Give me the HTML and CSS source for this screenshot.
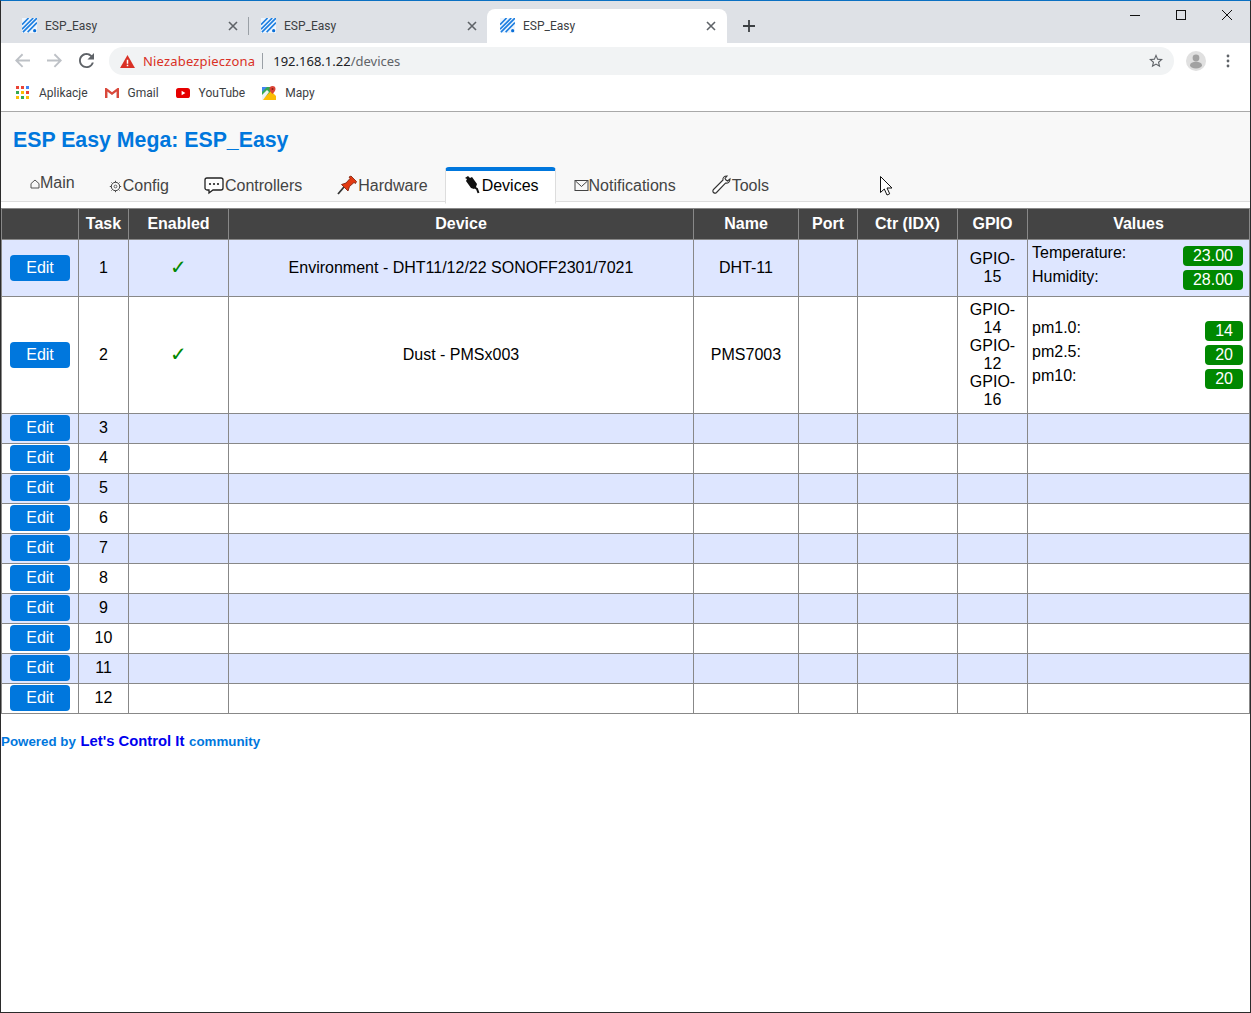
FILE: index.html
```html
<!DOCTYPE html>
<html lang="pl">
<head>
<meta charset="utf-8">
<title>ESP_Easy</title>
<link rel="stylesheet" href="styles.css">
</head>
<body>
<svg class="defs" width="0" height="0">
  <defs>
    <symbol id="fav" viewBox="0 0 16 16">
      <rect width="16" height="16" fill="#eef5fd"/>
      <path d="M0 7 7 0M0 12 12 0M1 15 16 0M6 15 16 5" stroke="#1c7ee0" stroke-width="1.7" fill="none"/>
      <circle cx="13.5" cy="13.5" r="1.7" fill="#0a6fd8"/>
    </symbol>
    <symbol id="x" viewBox="0 0 10 10">
      <path d="M1 1 9 9M9 1 1 9" stroke="#5f6368" stroke-width="1.6" fill="none"/>
    </symbol>
  </defs>
</svg>
<div class="window">
  <div class="tabstrip">
    <div class="ctab">
      <svg class="fav"><use href="#fav"/></svg><span class="ctab-title">ESP_Easy</span><svg class="ctab-x"><use href="#x"/></svg>
    </div>
    <div class="ctab-sep"></div>
    <div class="ctab ctab-second">
      <svg class="fav"><use href="#fav"/></svg><span class="ctab-title">ESP_Easy</span><svg class="ctab-x"><use href="#x"/></svg>
    </div>
    <div class="ctab ctab-active">
      <svg class="fav"><use href="#fav"/></svg><span class="ctab-title">ESP_Easy</span><svg class="ctab-x"><use href="#x"/></svg>
    </div>
    <svg class="newtab" viewBox="0 0 12 12"><path d="M6 0V12M0 6H12" stroke="#3c4043" stroke-width="1.8"/></svg>
    <div class="winctl">
      <svg class="win-btn" viewBox="0 0 10 10"><path d="M0 5.5H10" stroke="#111" stroke-width="1"/></svg>
      <svg class="win-btn" viewBox="0 0 10 10"><rect x=".5" y=".5" width="9" height="9" fill="none" stroke="#111"/></svg>
      <svg class="win-btn" viewBox="0 0 10 10"><path d="M0 0 10 10M10 0 0 10" stroke="#111" stroke-width="1"/></svg>
    </div>
  </div>
  <div class="toolbar">
    <svg class="nav" viewBox="0 0 16 16"><path d="M16 7H3.8l5-5L7.4.6 0 8l7.4 7.4 1.4-1.4-5-5H16z" fill="#bdc1c6"/></svg>
    <svg class="nav" viewBox="0 0 16 16"><path d="M0 7h12.2l-5-5L8.6.6 16 8l-7.4 7.4L7.2 14l5-5H0z" fill="#bdc1c6"/></svg>
    <svg class="nav nav-reload" viewBox="4 4 16 16"><path d="M17.65 6.35A7.958 7.958 0 0 0 12 4c-4.42 0-7.99 3.58-7.99 8s3.57 8 7.99 8c3.73 0 6.84-2.55 7.73-6h-2.08A5.99 5.99 0 0 1 12 18c-3.31 0-6-2.69-6-6s2.69-6 6-6c1.66 0 3.14.69 4.22 1.78L13 11h7V4l-2.35 2.35z" fill="#5f6368"/></svg>
    <div class="omnibox">
      <svg class="warn" viewBox="0 0 16 14"><path d="M8 0 16 14H0z" fill="#d93025"/><path d="M7.2 5h1.6v4.5H7.2zM7.2 10.5h1.6V12H7.2z" fill="#fff"/></svg>
      <span class="insecure">Niezabezpieczona</span>
      <span class="omni-sep"></span>
      <span class="url">192.168.1.22<span class="url-path">/devices</span></span>
      <svg class="star" viewBox="2 2 20 20"><path d="M22 9.24l-7.19-.62L12 2 9.19 8.63 2 9.24l5.46 4.73L5.82 21 12 17.27 18.18 21l-1.63-7.03L22 9.24zM12 15.4l-3.76 2.27 1-4.28-3.32-2.88 4.38-.38L12 6.1l1.71 4.04 4.38.38-3.32 2.88 1 4.28L12 15.4z" fill="#5f6368"/></svg>
    </div>
    <svg class="avatar" viewBox="0 0 20 20"><circle cx="10" cy="10" r="10" fill="#e0e0e0"/><circle cx="10" cy="7" r="3.4" fill="#a2a2a2"/><ellipse cx="10" cy="14.2" rx="6" ry="3.4" fill="#a2a2a2"/></svg>
    <svg class="menu-dots" viewBox="0 0 4 14"><circle cx="2" cy="2" r="1.4" fill="#5f6368"/><circle cx="2" cy="7" r="1.4" fill="#5f6368"/><circle cx="2" cy="12" r="1.4" fill="#5f6368"/></svg>
  </div>
  <div class="bookmarks">
    <div class="bm bm-apps">
      <svg class="bm-ico" viewBox="0 0 14 14">
        <g fill="#ea4335"><rect width="3" height="3"/><rect x="5" width="3" height="3"/></g><rect x="10" width="3" height="3" fill="#4285f4"/>
        <rect y="5" width="3" height="3" fill="#34a853"/><rect x="5" y="5" width="3" height="3" fill="#fbbc05"/><rect x="10" y="5" width="3" height="3" fill="#ea4335"/>
        <rect y="10" width="3" height="3" fill="#fbbc05"/><rect x="5" y="10" width="3" height="3" fill="#34a853"/><rect x="10" y="10" width="3" height="3" fill="#fbbc05"/>
      </svg>Aplikacje
    </div>
    <div class="bm bm-gap">
      <svg class="bm-ico" viewBox="0 0 14 14"><path d="M1.900 11.500V4.800L7 8.600l5.100-3.800v6.700" fill="none" stroke="#d8d8d8" stroke-width="1"/><path d="M0 2h1.500L7 6.300 12.500 2H14v10h-2.400V5.600L7 9 2.400 5.600V12H0z" fill="#d9483b"/></svg>Gmail
    </div>
    <div class="bm bm-gap">
      <svg class="bm-ico" viewBox="0 0 14 14"><rect y="2" width="14" height="10" rx="2.6" fill="#e60000"/><path d="M5.6 4.8 9.4 7 5.6 9.2z" fill="#fff"/></svg>YouTube
    </div>
    <div class="bm bm-gap">
      <svg class="bm-ico" viewBox="0 0 14 14"><path d="M0 1h9v13H0z" fill="#34a853"/><path d="M0 14 9 5l5 5v4z" fill="#fbbc05"/><path d="M0 1h5L0 6z" fill="#4285f4"/><path d="M0 9 5 4l2 2-6 8H0z" fill="#f1f3f4"/><path d="M10.500 0A3 3 0 0 1 13.500 3C13.500 5 10.500 8 10.500 8S7.500 5 7.500 3A3 3 0 0 1 10.500 0z" fill="#db4437"/><circle cx="10.500" cy="3" r="1" fill="#8e1f14"/></svg>Mapy
    </div>
  </div>

  <div class="apheader">
    <h1 class="title">ESP Easy Mega: ESP_Easy</h1>
    <nav class="menubar">
      <a class="menu menu-main"><svg class="mi mi-home" viewBox="0 0 10 10"><path d="M1 9V4.600L5 1l4 3.600V9z" fill="none" stroke="#444" stroke-width=".9"/></svg>Main</a>
      <a class="menu"><svg class="mi mi-gear" viewBox="0 0 14 13"><circle cx="6.500" cy="6.500" r="4.200" fill="none" stroke="#444"/><circle cx="6.500" cy="6.500" r="1.400" fill="none" stroke="#444" stroke-width=".8"/><path d="M6.500 .8v1.600M6.500 10.600v1.600M.8 6.500h1.600M10.600 6.500h1.600M2.500 2.500l1 1M9.500 9.500l1 1M10.500 2.500l-1 1M3.500 9.500l-1 1" stroke="#444"/></svg>Config</a>
      <a class="menu"><svg class="mi mi-wide" viewBox="-2 0 22 20"><path d="M2 3h14a2 2 0 0 1 2 2v8a2 2 0 0 1-2 2H8l-4 3v-3H2a2 2 0 0 1-2-2V5a2 2 0 0 1 2-2z" fill="#fff" stroke="#222" stroke-width="1.300"/><circle cx="5" cy="9" r="1.100" fill="#222"/><circle cx="9" cy="9" r="1.100" fill="#222"/><circle cx="13" cy="9" r="1.100" fill="#222"/></svg>Controllers</a>
      <a class="menu"><svg class="mi mi-wide" viewBox="-2 0 22 20"><path d="M0 19 6 12" stroke="#333" stroke-width="1.800"/><path d="M3.500 9.500 8 8l4-4.500-1-1.500 2-1 5.500 5.500-1 2-1.500-1-4.500 4-1.500 4.500z" fill="#e23a12" stroke="#7a1c06" stroke-width=".8"/></svg>Hardware</a>
      <a class="menu menu-active"><svg class="mi mi-plug" viewBox="-2 0 20 20"><path d="M1 3 4 1l2 2 2-1 5 7-1 3-2 2-3-1-5-7 1-2z" fill="#111"/><path d="M10 12l3 2 1.500 4" stroke="#111" stroke-width="2" fill="none"/></svg>Devices</a>
      <a class="menu"><svg class="mi mi-mail" viewBox="-1 0 15 11"><rect x=".5" y=".5" width="13" height="10" fill="none" stroke="#444"/><path d="M1 1 7 6.500 13 1" fill="none" stroke="#444"/></svg>Notifications</a>
      <a class="menu"><svg class="mi mi-wide" viewBox="-2 0 22 20"><path d="M1.500 14.500 11 5c-.5-2 1-4 4-4l-2 2.500 1 1.500 1.500 1L18 4c0 3-2 4.500-4.500 4L4.500 17.500c-2 2-5-1-3-3z" fill="#fff" stroke="#333" stroke-width="1.100"/></svg>Tools</a>
    </nav>
  </div>

  <table class="devices">
    <colgroup>
      <col class="c-edit"><col class="c-task"><col class="c-en"><col class="c-dev"><col class="c-name"><col class="c-port"><col class="c-ctr"><col class="c-gpio"><col class="c-val">
    </colgroup>
    <thead>
      <tr><th></th><th>Task</th><th>Enabled</th><th>Device</th><th>Name</th><th>Port</th><th>Ctr (IDX)</th><th>GPIO</th><th>Values</th></tr>
    </thead>
    <tbody>
      <tr class="even">
        <td class="td-btn"><a class="button">Edit</a></td><td>1</td><td><span class="check">✓</span></td>
        <td>Environment - DHT11/12/22 SONOFF2301/7021</td><td>DHT-11</td><td></td><td></td>
        <td>GPIO-<br>15</td>
        <td class="td-values">
          <div class="val"><span>Temperature:</span><span class="badge">23.00</span></div>
          <div class="val"><span>Humidity:</span><span class="badge">28.00</span></div>
        </td>
      </tr>
      <tr>
        <td class="td-btn"><a class="button">Edit</a></td><td>2</td><td><span class="check">✓</span></td>
        <td>Dust - PMSx003</td><td>PMS7003</td><td></td><td></td>
        <td>GPIO-<br>14<br>GPIO-<br>12<br>GPIO-<br>16</td>
        <td class="td-values">
          <div class="val"><span>pm1.0:</span><span class="badge">14</span></div>
          <div class="val"><span>pm2.5:</span><span class="badge">20</span></div>
          <div class="val"><span>pm10:</span><span class="badge">20</span></div>
        </td>
      </tr>
      <tr class="even"><td class="td-btn"><a class="button">Edit</a></td><td>3</td><td></td><td></td><td></td><td></td><td></td><td></td><td></td></tr>
      <tr><td class="td-btn"><a class="button">Edit</a></td><td>4</td><td></td><td></td><td></td><td></td><td></td><td></td><td></td></tr>
      <tr class="even"><td class="td-btn"><a class="button">Edit</a></td><td>5</td><td></td><td></td><td></td><td></td><td></td><td></td><td></td></tr>
      <tr><td class="td-btn"><a class="button">Edit</a></td><td>6</td><td></td><td></td><td></td><td></td><td></td><td></td><td></td></tr>
      <tr class="even"><td class="td-btn"><a class="button">Edit</a></td><td>7</td><td></td><td></td><td></td><td></td><td></td><td></td><td></td></tr>
      <tr><td class="td-btn"><a class="button">Edit</a></td><td>8</td><td></td><td></td><td></td><td></td><td></td><td></td><td></td></tr>
      <tr class="even"><td class="td-btn"><a class="button">Edit</a></td><td>9</td><td></td><td></td><td></td><td></td><td></td><td></td><td></td></tr>
      <tr><td class="td-btn"><a class="button">Edit</a></td><td>10</td><td></td><td></td><td></td><td></td><td></td><td></td><td></td></tr>
      <tr class="even"><td class="td-btn"><a class="button">Edit</a></td><td>11</td><td></td><td></td><td></td><td></td><td></td><td></td><td></td></tr>
      <tr><td class="td-btn"><a class="button">Edit</a></td><td>12</td><td></td><td></td><td></td><td></td><td></td><td></td><td></td></tr>
    </tbody>
  </table>
  <h6 class="footer">Powered by <a class="footer-link">Let's Control It</a> community</h6>
  <svg class="cursor" viewBox="0 0 13 20"><path d="M.5.5V16.500L4.300 13l2.700 6 2.700-1.200L7 12h5z" fill="#fff" stroke="#111" stroke-width="1"/></svg>
</div>
</body>
</html>
```

FILE: styles.css
```css
* { box-sizing: border-box; }
html, body { margin: 0; padding: 0; background: #fff; }
body { font-family: "Liberation Sans", Arial, "DejaVu Sans", sans-serif; font-size: 16px; color: #000; }
.defs { position: absolute; }

.window {
  position: relative;
  width: 1251px;
  height: 1013px;
  overflow: hidden;
  border: 1px solid #2b2b2b;
  border-top-color: #0a70c2;
  display: flex;
  flex-direction: column;
}

/* Browser chrome */
.tabstrip {
  height: 42px;
  flex: none;
  background: #dee1e6;
  display: flex;
  align-items: flex-end;
  padding-left: 7px;
  font-family: Roboto, "Noto Sans", sans-serif;
  font-size: 12px;
  color: #3c4043;
}
.ctab {
  width: 240px;
  height: 34px;
  display: flex;
  align-items: center;
  padding: 0 10px 1px 14px;
  flex: none;
}
.ctab-second { margin-left: -1px; width: 239px; padding-left: 13px; }
.ctab-sep { width: 1px; height: 18px; background: #9aa0a6; margin-bottom: 8px; flex: none; }
.ctab-active { background: #fff; border-radius: 8px 8px 0 0; color: #3c4043; padding-left: 13px; padding-right: 11px; }
.fav { width: 15px; height: 15px; margin-right: 8px; flex: none; }
.ctab-title { flex: 1; }
.ctab-x { width: 10px; height: 10px; flex: none; }
.newtab { width: 12px; height: 12px; margin: 0 0 11px 16px; flex: none; }
.winctl {
  position: absolute;
  top: 9px;
  right: 18px;
  display: flex;
  gap: 36px;
}
.win-btn { width: 10px; height: 10px; display: block; }

.toolbar {
  height: 36px;
  flex: none;
  background: #fff;
  display: flex;
  align-items: center;
  padding: 0 0 0 14px;
}
.nav { width: 15px; height: 15px; flex: none; margin-right: 17px; margin-top: -1px; }
.nav-reload { margin-right: 15px; }
.omnibox {
  width: 1065px;
  height: 28px;
  border-radius: 14px;
  background: #f1f3f4;
  display: flex;
  align-items: center;
  padding: 0 11px;
  font-family: "Noto Sans", sans-serif;
  font-size: 13px;
  flex: none;
}
.warn { width: 15px; height: 13px; flex: none; margin-right: 8px; }
.insecure { color: #d93025; letter-spacing: .18px; }
.omni-sep { width: 1px; height: 16px; background: #9aa0a6; margin: 0 10px 0 7px; }
.url { color: #202124; flex: 1; }
.url-path { color: #5f6368; }
.star { width: 14px; height: 14px; }
.avatar { width: 20px; height: 20px; margin-left: 12px; flex: none; }
.menu-dots { width: 4px; height: 14px; margin-left: 20px; flex: none; }

.bookmarks {
  height: 33px;
  flex: none;
  background: #fff;
  border-bottom: 1px solid #a9a9a9;
  display: flex;
  align-items: center;
  padding: 0 0 4px 15px;
  font-family: Roboto, "Noto Sans", sans-serif;
  font-size: 12px;
  color: #3c4043;
}
.bm { display: flex; align-items: center; }
.bm-ico { width: 14px; height: 14px; margin-right: 9px; flex: none; }
.bm-gap { margin-left: 17px; }

/* ESP Easy page */
.apheader {
  flex: none;
  background: #f8f8f8;
  padding: 16px 12px 0;
  border-bottom: 1px solid #ddd;
}
.title {
  margin: 0 0 15px;
  font-size: 21.3px;
  line-height: 24px;
  font-weight: bold;
  color: #07d;
}
.menubar { display: flex; align-items: flex-start; margin-bottom: -3px; }
.menu {
  height: 37px;
  padding: 6px 16px 0;
  color: #444;
  white-space: nowrap;
  border: solid transparent;
  border-width: 4px 1px 1px;
  border-radius: 4px 4px 0 0;
  display: flex;
  align-items: flex-start;
  line-height: 18px;
}
.menu-main { padding-top: 3px; }
.menu-active {
  position: relative;
  color: #000;
  background: #fff;
  border-color: #07d #ddd #fff;
}
.mi { flex: none; }
.mi-home { width: 10px; height: 10px; margin-top: 5px; }
.mi-gear { width: 14px; height: 13px; margin-top: 3px; }
.mi-wide { width: 22px; height: 20px; margin-top: -2px; }
.mi-plug { width: 20px; height: 20px; margin-top: -2px; }
.mi-mail { width: 16px; height: 11px; margin-top: 3px; }

.devices {
  table-layout: fixed;
  border-collapse: collapse;
  width: 1248px;
  margin-top: 6px;
  flex: none;
}
.devices th, .devices td { border: 1px solid #888; text-align: center; }
.devices th {
  padding: 6px;
  background: #444;
  color: #fff;
  font-weight: bold;
  line-height: 18px;
}
.devices td { padding: 4px; line-height: 18px; }
.devices tbody tr:nth-child(n+3) td { padding: 3px 4px 5px; }
.even td { background: #dee6ff; }
.c-edit { width: 77px; }
.c-task { width: 50px; }
.c-en { width: 100px; }
.c-dev { width: 465px; }
.c-name { width: 105px; }
.c-port { width: 59px; }
.c-ctr { width: 100px; }
.c-gpio { width: 70px; }
.c-val { width: 222px; }

.devices tbody tr td.td-btn { padding: 1px 4px 2px; }
.button {
  display: block;
  margin: 0 4px;
  padding: 4px 0;
  line-height: 18px;
  background: #07d;
  color: #fff;
  border-radius: 4px;
}
.check { color: #080; font-family: "DejaVu Sans", sans-serif; font-size: 20px; line-height: 18px; }
.devices .td-values { text-align: left; }
.val { display: flex; justify-content: space-between; align-items: flex-start; height: 24px; }
.badge {
  margin: 2px;
  padding: 1px 10px;
  line-height: 18px;
  border-radius: 4px;
  background: #080;
  color: #fff;
}

.footer {
  margin: 17px 0 0;
  font-size: 13.33px;
  font-weight: bold;
  color: #07d;
  line-height: 20px;
}
.footer-link { color: #00e; font-size: 14.8px; padding: 0 1px; }

.cursor {
  position: absolute;
  left: 879px;
  top: 175px;
  width: 13px;
  height: 20px;
}
```
